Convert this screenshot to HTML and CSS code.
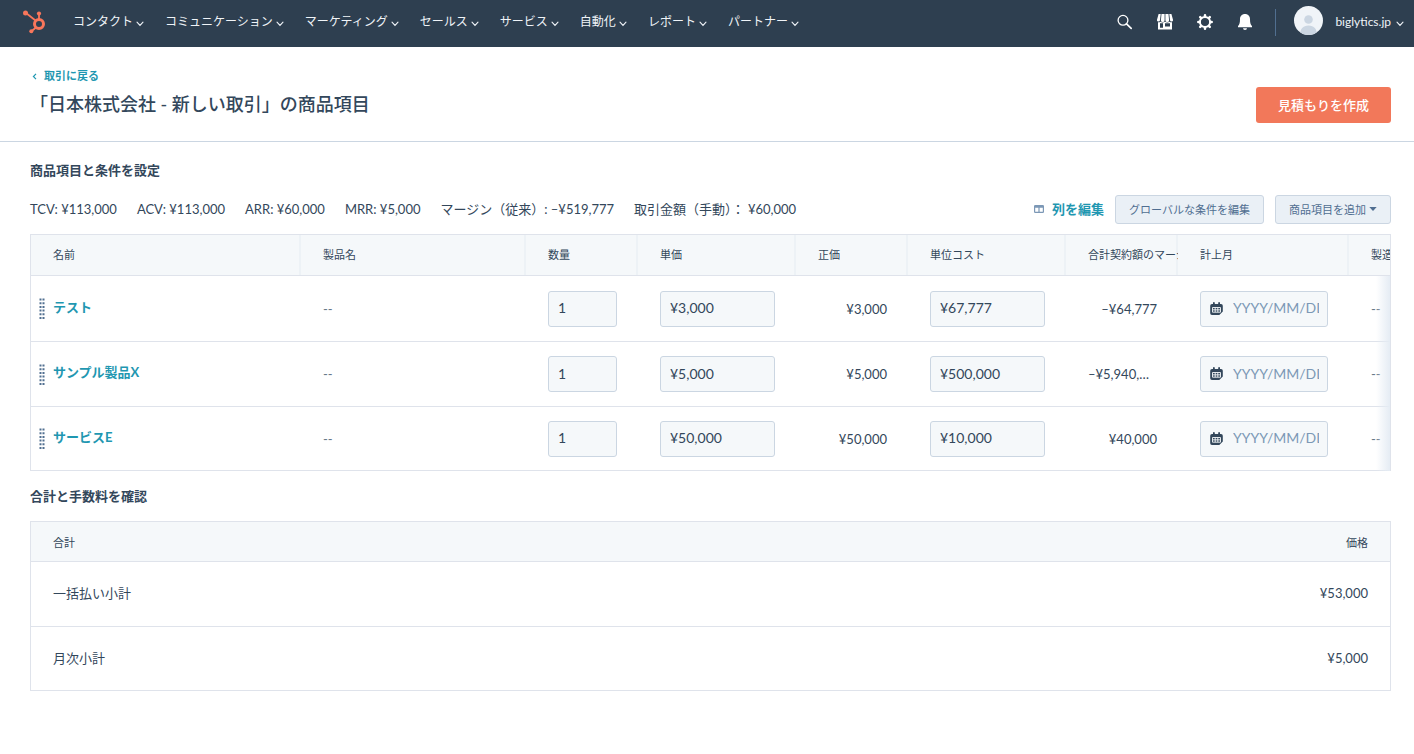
FILE: index.html
```html
<!DOCTYPE html>
<html lang="ja">
<head>
<meta charset="utf-8">
<meta name="viewport" content="width=device-width, initial-scale=1">
<title>「日本株式会社 - 新しい取引」の商品項目</title>
<link rel="stylesheet" href="styles.css">
</head>
<body>
<svg class="defs" aria-hidden="true">
  <symbol id="chev" viewBox="0 0 8 6"><path d="M1 1.2 4 4.4 7 1.2" fill="none" stroke="currentColor" stroke-width="1.1" stroke-linecap="round"/></symbol>
  <symbol id="grip" viewBox="0 0 6 21"><path d="M1.5 .5v21M4.5 .5v21" fill="none" stroke="currentColor" stroke-width="2" stroke-dasharray="2 1.7"/></symbol>
  <symbol id="cal" viewBox="0 0 13 14"><path fill="currentColor" d="M2 2h1V1a.9.9 0 0 1 1.800 0v1h3.400V1a.9.9 0 0 1 1.800 0v1h1a1.800 1.800 0 0 1 1.800 1.800v5.700L9.300 13H2A1.800 1.800 0 0 1 .2 11.200V3.800A1.800 1.800 0 0 1 2 2z"/><path d="M2.500 5.500h8v4.700h-8zM2.500 7.850h8M5.200 5.500v4.700M7.800 5.500v4.700" fill="none" stroke="#f5f8fa" stroke-width=".9"/></symbol>
</svg>

<header class="topbar">
  <a class="logo" href="#" aria-label="ホーム">
    <svg width="24" height="26" viewBox="22 10 24 26" fill="none" stroke="#f8765b">
      <path d="M26 14l9.500 7.500M39 15v6M36 28.500l-4.500 3.800" stroke-width="1.800"/>
      <circle cx="39" cy="25" r="4.500" stroke-width="3"/>
      <g fill="#f8765b" stroke="none"><circle cx="25.500" cy="14" r="2.500"/><circle cx="39" cy="14.600" r="2.100"/><circle cx="31.300" cy="32.300" r="2"/></g>
    </svg>
  </a>
  <nav class="menu">
    <button class="menu-item">コンタクト<svg class="chev"><use href="#chev"/></svg></button>
    <button class="menu-item">コミュニケーション<svg class="chev"><use href="#chev"/></svg></button>
    <button class="menu-item">マーケティング<svg class="chev"><use href="#chev"/></svg></button>
    <button class="menu-item">セールス<svg class="chev"><use href="#chev"/></svg></button>
    <button class="menu-item">サービス<svg class="chev"><use href="#chev"/></svg></button>
    <button class="menu-item">自動化<svg class="chev"><use href="#chev"/></svg></button>
    <button class="menu-item">レポート<svg class="chev"><use href="#chev"/></svg></button>
    <button class="menu-item">パートナー<svg class="chev"><use href="#chev"/></svg></button>
  </nav>
  <div class="tools">
    <button class="tool" aria-label="検索"><svg width="16" height="16" viewBox="0 0 16 16" fill="none" stroke="#fff"><circle cx="6" cy="6.300" r="4.900" stroke-width="1.300"/><path d="M9.500 9.800l4.700 4.500" stroke-width="1.700" stroke-linecap="round"/></svg></button>
    <button class="tool" aria-label="マーケットプレイス"><svg width="16" height="16" viewBox="0 0 16 16"><path fill="#fff" d="M1.600 0h2.100L3 6.200A1.500 1.500 0 0 1 0 5.800zM4.500 0h3.100v6.200a1.700 1.700 0 0 1-3.700 0zM8.400 0h3.100l.6 6.200a1.700 1.700 0 0 1-3.700 0zM12.300 0h2.100L16 5.800a1.500 1.500 0 0 1-3 .4z"/><path fill="#fff" fill-rule="evenodd" d="M1 8.200c.8.300 1.800.1 2.400-.5 1.300 1 3.200 1 4.600 0 1.400 1 3.300 1 4.600 0 .6.600 1.600.8 2.400.5V15.500H1zM3 9.200v4.600h3V9.200zM8 9.200v3.300h5V9.200z"/></svg></button>
    <button class="tool" aria-label="設定"><svg width="16" height="16" viewBox="0 0 16 16" fill="none" stroke="#fff"><circle cx="8" cy="8" r="5.100" stroke-width="2"/><path d="M8 1.300v1.400M8 13.300v1.400M1.300 8h1.400M13.300 8h1.400M3.200 3.200l1 1M11.800 11.800l1 1M3.200 12.800l1-1M11.800 4.200l1-1" stroke-width="2.500" stroke-linecap="round"/></svg></button>
    <button class="tool" aria-label="通知"><svg width="16" height="16" viewBox="0 0 16 16" fill="#fff"><path d="M8 0c3 0 5 2.200 5 5.200 0 4 .6 5.300 2 6.800v1.200H1V12c1.400-1.500 2-2.800 2-6.800C3 2.200 5 0 8 0zM6 14.200h4a2 1.800 0 0 1-4 0z"/></svg></button>
  </div>
  <button class="account">
    <svg class="avatar" width="29" height="29" viewBox="0 0 29 29"><defs><clipPath id="round"><circle cx="14.500" cy="14.500" r="14.500"/></clipPath></defs><g clip-path="url(#round)"><path fill="#f0f4f8" d="M0 0h29v29H0z"/><circle cx="14.500" cy="13.500" r="4.300" fill="#cbd6e2"/><path d="M6 29c0-6 3-9.500 8.500-9.500S23 23 23 29z" fill="#cbd6e2"/></g></svg>
    <span>biglytics.jp</span><svg class="chev"><use href="#chev"/></svg>
  </button>
</header>

<section class="pagehead">
  <div>
    <a class="back" href="#"><svg width="5" height="7" viewBox="0 0 5 7"><path d="M4 .8 1.400 3.500 4 6.200" fill="none" stroke="currentColor" stroke-width="1.200"/></svg>取引に戻る</a>
    <h1>「日本株式会社 - 新しい取引」の商品項目</h1>
  </div>
  <button class="primary">見積もりを作成</button>
</section>

<main>
  <h2>商品項目と条件を設定</h2>
  <div class="bar">
    <ul class="stats">
      <li>TCV: ¥113,000</li>
      <li>ACV: ¥113,000</li>
      <li>ARR: ¥60,000</li>
      <li>MRR: ¥5,000</li>
      <li>マージン（従来）: –¥519,777</li>
      <li>取引金額（手動）： ¥60,000</li>
    </ul>
    <div class="actions">
      <a class="editcols" href="#"><svg width="10" height="8" viewBox="0 0 10 8"><path fill="#7c98b6" fill-rule="evenodd" d="M1.200 0h7.600A1.200 1.200 0 0 1 10 1.200v5.600A1.200 1.200 0 0 1 8.800 8H1.200A1.200 1.200 0 0 1 0 6.800V1.200A1.200 1.200 0 0 1 1.200 0zM1.200 2.700v4h3.200v-4zM5.600 2.700v4h3.200v-4z"/></svg>列を編集</a>
      <button class="secondary">グローバルな条件を編集</button>
      <button class="secondary">商品項目を追加<svg width="8" height="4" viewBox="0 0 8 4"><path d="M.3 0h7.400L4 4z" fill="currentColor"/></svg></button>
    </div>
  </div>

  <div class="scroller">
    <table class="items">
      <colgroup><col class="c-name"><col class="c-prod"><col class="c-s"><col class="c-m"><col class="c-s"><col class="c-m"><col class="c-s"><col class="c-date"><col class="c-last"></colgroup>
      <thead>
        <tr><th>名前</th><th>製品名</th><th>数量</th><th>単価</th><th>正価</th><th>単位コスト</th><th>合計契約額のマージ</th><th>計上月</th><th>製造</th></tr>
      </thead>
      <tbody>
        <tr>
          <td class="name"><div class="namebox"><svg class="grip"><use href="#grip"/></svg><a href="#">テスト</a></div></td>
          <td class="none">--</td>
          <td><input type="text" value="1" aria-label="数量"></td>
          <td><input type="text" value="¥3,000" aria-label="単価"></td>
          <td class="num">¥3,000</td>
          <td><input type="text" value="¥67,777" aria-label="単位コスト"></td>
          <td class="num">–¥64,777</td>
          <td><label class="date"><svg width="13" height="14"><use href="#cal"/></svg><input type="text" placeholder="YYYY/MM/DD" aria-label="計上月"></label></td>
          <td class="none">--</td>
        </tr>
        <tr>
          <td class="name"><div class="namebox"><svg class="grip"><use href="#grip"/></svg><a href="#">サンプル製品X</a></div></td>
          <td class="none">--</td>
          <td><input type="text" value="1" aria-label="数量"></td>
          <td><input type="text" value="¥5,000" aria-label="単価"></td>
          <td class="num">¥5,000</td>
          <td><input type="text" value="¥500,000" aria-label="単位コスト"></td>
          <td>–¥5,940,…</td>
          <td><label class="date"><svg width="13" height="14"><use href="#cal"/></svg><input type="text" placeholder="YYYY/MM/DD" aria-label="計上月"></label></td>
          <td class="none">--</td>
        </tr>
        <tr>
          <td class="name"><div class="namebox"><svg class="grip"><use href="#grip"/></svg><a href="#">サービスE</a></div></td>
          <td class="none">--</td>
          <td><input type="text" value="1" aria-label="数量"></td>
          <td><input type="text" value="¥50,000" aria-label="単価"></td>
          <td class="num">¥50,000</td>
          <td><input type="text" value="¥10,000" aria-label="単位コスト"></td>
          <td class="num">¥40,000</td>
          <td><label class="date"><svg width="13" height="14"><use href="#cal"/></svg><input type="text" placeholder="YYYY/MM/DD" aria-label="計上月"></label></td>
          <td class="none">--</td>
        </tr>
      </tbody>
    </table>
    <div class="fade"></div>
  </div>

  <h2>合計と手数料を確認</h2>
  <table class="totals">
    <thead><tr><th>合計</th><th>価格</th></tr></thead>
    <tbody>
      <tr><td>一括払い小計</td><td>¥53,000</td></tr>
      <tr><td>月次小計</td><td>¥5,000</td></tr>
    </tbody>
  </table>
</main>
</body>
</html>
```
FILE: styles.css
```css
* { box-sizing: border-box; }

body {
  margin: 0;
  background: #fff;
  color: #33475b;
  font: 13px/20px Lato, "Noto Sans CJK JP", sans-serif;
}

button, input { font-family: inherit; color: inherit; }
button { border: 0; padding: 0; background: none; cursor: pointer; }
svg { flex: none; display: block; }
a { color: #1f97b1; font-weight: 700; text-decoration: none; }
.defs { position: absolute; width: 0; height: 0; }

/* top navigation */
.topbar {
  display: flex;
  align-items: center;
  height: 47px;
  padding: 0 10px 3px 22px;
  background: #2e3f50;
  color: #f0f4f8;
}
.logo { margin-right: 27px; }
.menu { display: flex; gap: 21px; flex: 1; }
.menu-item {
  display: flex;
  align-items: center;
  gap: 3px;
  font-size: 12px;
  line-height: 20px;
  white-space: nowrap;
}
.chev { width: 8px; height: 6px; margin-top: 3px; }
.tools { display: flex; gap: 24px; padding-right: 22px; }
.account {
  display: flex;
  align-items: center;
  font-size: 12px;
  line-height: 20px;
}
.account::before {
  content: "";
  width: 1px;
  height: 27px;
  margin-right: 18px;
  background: #516f90;
}
.account span { margin: 0 5px 0 12px; }
.avatar { margin-bottom: 3px; }

/* page header */
.pagehead {
  display: flex;
  justify-content: space-between;
  align-items: flex-end;
  padding: 19px 23px 18px 30px;
  border-bottom: 1px solid #cbd6e2;
}
.back {
  display: flex;
  align-items: center;
  gap: 7px;
  padding-left: 2px;
  font-size: 11px;
}
h1 {
  margin: 5px 0 6px;
  font-size: 18px;
  line-height: 26px;
  font-weight: 500;
}
.primary {
  height: 36px;
  padding: 0 22px 2px;
  border-radius: 3px;
  background: #f2785a;
  color: #fff;
  font-size: 13px;
  font-weight: 500;
}

main { padding: 18px 23px 18px 30px; }
h2 { margin: 0; font-size: 13px; line-height: 20px; font-weight: 700; }

.bar {
  display: flex;
  justify-content: space-between;
  align-items: center;
  padding: 15px 0 10px;
}
.stats { display: flex; gap: 20px; margin: 0; padding: 0 0 2px; list-style: none; white-space: nowrap; }
.actions { display: flex; align-items: center; gap: 11px; }
.editcols { display: flex; align-items: center; gap: 8px; padding-bottom: 2px; }
.secondary {
  display: flex;
  align-items: center;
  gap: 3px;
  height: 29px;
  padding: 0 13px 2px;
  border: 1px solid #cbd6e2;
  border-radius: 3px;
  background: #eaf0f6;
  color: #506e91;
  font-size: 11px;
  white-space: nowrap;
}

/* line items */
.scroller {
  position: relative;
  overflow: hidden;
  margin-bottom: 15px;
  border: 1px solid #dfe3eb;
  border-bottom: 0;
}
.items { width: 1500px; table-layout: fixed; border-collapse: separate; border-spacing: 0; }
.c-name { width: 270px; }
.c-prod { width: 225px; }
.c-s { width: 112px; }
.c-m { width: 158px; }
.c-date { width: 171px; }

th {
  height: 41px;
  padding: 0 0 0 22px;
  overflow: hidden;
  border-bottom: 1px solid #dfe3eb;
  background: #f5f8fa;
  font-size: 11px;
  font-weight: 400;
  text-align: left;
  white-space: nowrap;
}
.items th { box-shadow: inset -2px 0 #edf2f6; }
td { height: 65px; border-bottom: 1px solid #dfe3eb; }
tr:last-child td { height: 64px; }
.items tr:first-child td { height: 66px; }
.items td {
  padding: 0 21px 0 22px;
  overflow: hidden;
  text-overflow: ellipsis;
  white-space: nowrap;
}
.items .num { text-align: right; }
.items .none { color: #67788a; }
.items .name { padding-left: 8px; }
.namebox { display: flex; align-items: center; gap: 8px; }
.namebox a { padding-bottom: 4px; }
.grip { width: 6px; height: 21px; color: #516f90; }

.items input {
  display: block;
  width: 100%;
  height: 36px;
  padding: 0 9px 2px;
  border: 1px solid #cbd6e2;
  border-radius: 3px;
  background: #f5f8fa;
  font-size: 14px;
}
.date {
  display: flex;
  align-items: center;
  gap: 10px;
  height: 36px;
  padding: 0 8px 0 9px;
  border: 1px solid #cbd6e2;
  border-radius: 3px;
  background: #f5f8fa;
}
.items .date input { flex: 1; min-width: 0; height: 34px; padding: 0 0 2px; border: 0; background: none; }
.date input::placeholder { color: #7c98b6; opacity: 1; }
.fade {
  position: absolute;
  top: 41px;
  right: 0;
  bottom: 0;
  width: 14px;
  background: linear-gradient(to right, rgba(234, 240, 246, 0), #e5ecf4);
}

/* totals */
.totals {
  width: 100%;
  margin-top: 15px;
  border: 1px solid #dfe3eb;
  border-bottom: 0;
  border-spacing: 0;
}
.totals th { height: 40px; padding: 2px 22px 0; }
.totals td { padding: 0 22px 2px; }
.totals th:last-child, .totals td:last-child { text-align: right; }
```
